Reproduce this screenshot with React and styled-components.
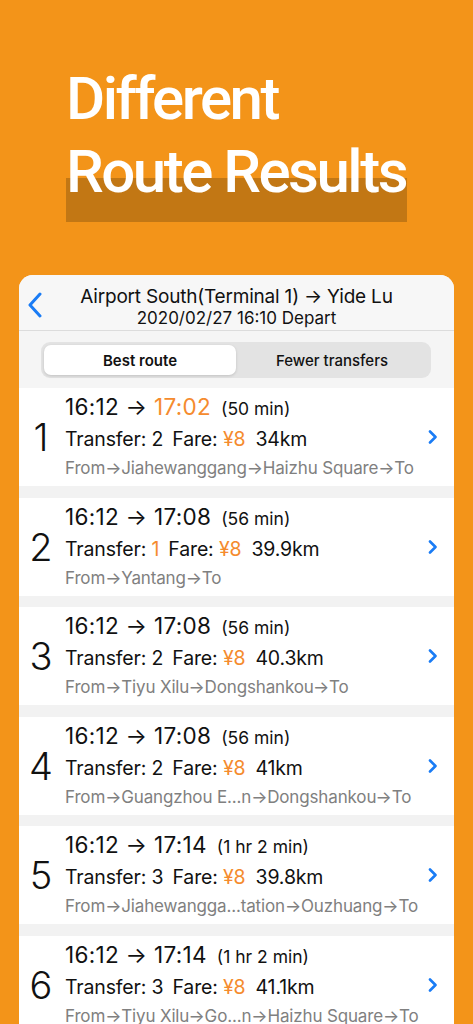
import React from "react";
import styled, { createGlobalStyle } from "styled-components";

const Global = createGlobalStyle`
  html, body { margin: 0; padding: 0; }
  body {
    background: #F39419;
    font-family: Inter, "Noto Sans", "Liberation Sans", sans-serif;
    overflow: hidden;
  }
`;

const Page = styled.div`
  width: 473px;
  height: 1024px;
  overflow: hidden;
  background: #F39419;
  display: flex;
  flex-direction: column;
  & > * { flex-shrink: 0; }
`;

const Hero = styled.div`
  position: relative;
  margin: 62px 0 0 66px;
  width: max-content;
`;

const HeroLine = styled.div`
  position: relative;
  z-index: 1;
  font-family: Roboto, "DejaVu Sans", sans-serif;
  font-weight: 500;
  font-size: 60px;
  line-height: 73px;
  letter-spacing: -2.5px;
  color: #ffffff;
  white-space: nowrap;
`;

const HeroBar = styled.div`
  position: absolute;
  left: 0;
  top: 116px;
  width: 341px;
  height: 44px;
  background: #C27714;
  z-index: 0;
`;

const Card = styled.div`
  margin: 67px 19px 0 19px;
  background: #F2F2F2;
  border-radius: 14px 14px 0 0;
  overflow: hidden;
  display: flex;
  flex-direction: column;
  & > * { flex-shrink: 0; }
`;

const Header = styled.div`
  height: 55px;
  background: #F7F7F7;
  border-bottom: 1px solid #DCDCDC;
  display: grid;
  grid-template-columns: 40px 1fr 40px;
  align-items: center;
`;

const Back = styled.div`
  display: flex;
  align-items: center;
  padding-left: 8px;
  padding-top: 4px;
`;

const HeaderText = styled.div`
  align-self: start;
  display: flex;
  flex-direction: column;
  align-items: center;
  padding-top: 10px;
`;

const HeaderTitle = styled.div`
  font-size: 19px;
  line-height: 23px;
  color: #111;
  white-space: nowrap;
  letter-spacing: -0.2px;
`;

const HeaderSub = styled.div`
  font-size: 17px;
  line-height: 20px;
  color: #111;
  white-space: nowrap;
`;

const SegmentArea = styled.div`
  background: #F5F5F5;
  padding: 11px 23px 10px 22px;
`;

const Segmented = styled.div`
  height: 36px;
  background: #E3E3E3;
  border-radius: 9px;
  padding: 3px;
  box-sizing: border-box;
  display: grid;
  grid-template-columns: 1fr 1fr;
`;

const Segment = styled.div`
  display: flex;
  align-items: center;
  justify-content: center;
  border-radius: 7px;
  font-size: 15px;
  font-weight: ${(p) => (p.$active ? 600 : 500)};
  color: #111;
  background: ${(p) => (p.$active ? "#ffffff" : "transparent")};
  box-shadow: ${(p) => (p.$active ? "0 1px 3px rgba(0,0,0,0.15)" : "none")};
`;

const List = styled.div`
  display: flex;
  flex-direction: column;
  gap: 11.5px;
`;

const Row = styled.div`
  height: 98px;
  box-sizing: border-box;
  background: #ffffff;
  display: grid;
  grid-template-columns: 46px 1fr 26px;
  align-items: center;
`;

const Num = styled.div`
  text-align: center;
  padding-right: 2px;
  font-size: 38px;
  font-weight: 300;
  color: #111;
  line-height: 1;
`;

const Info = styled.div`
  display: flex;
  flex-direction: column;
  min-width: 0;
`;

const Line1 = styled.div`
  font-size: 22.5px;
  line-height: 30px;
  color: #111;
  white-space: nowrap;
  letter-spacing: 0.3px;
`;

const Dur = styled.span`
  font-size: 17.5px;
  letter-spacing: 0;
  margin-left: 10px;
`;

const Line2 = styled.div`
  font-size: 19.5px;
  line-height: 30px;
  color: #111;
  white-space: nowrap;
  letter-spacing: -0.15px;
`;

const Line3 = styled.div`
  font-size: 17px;
  line-height: 28px;
  color: #808080;
  white-space: nowrap;
  overflow: hidden;
  letter-spacing: -0.15px;
`;

const Orange = styled.span`
  color: #F58B2E;
`;

const Gap = styled.span`
  margin-left: ${(p) => p.$w}px;
`;

const Chevron = styled.div`
  display: flex;
  align-items: center;
`;

const routes = [
  { arr: "17:02", arrOrange: true, dur: "(50 min)", tr: "2", trOrange: false, km: "34km", path: "From→Jiahewanggang→Haizhu Square→To" },
  { arr: "17:08", dur: "(56 min)", tr: "1", trOrange: true, km: "39.9km", path: "From→Yantang→To" },
  { arr: "17:08", dur: "(56 min)", tr: "2", km: "40.3km", path: "From→Tiyu Xilu→Dongshankou→To" },
  { arr: "17:08", dur: "(56 min)", tr: "2", km: "41km", path: "From→Guangzhou E...n→Dongshankou→To" },
  { arr: "17:14", dur: "(1 hr 2 min)", tr: "3", km: "39.8km", path: "From→Jiahewangga...tation→Ouzhuang→To" },
  { arr: "17:14", dur: "(1 hr 2 min)", tr: "3", km: "41.1km", path: "From→Tiyu Xilu→Go...n→Haizhu Square→To" },
];

const BackIcon = () => (
  <svg width="16" height="26" viewBox="0 0 16 26">
    <path d="M13 2 L3 13 L13 24" fill="none" stroke="#1A7CF5" strokeWidth="3" strokeLinecap="round" strokeLinejoin="round" />
  </svg>
);

const ChevronIcon = () => (
  <svg width="10" height="14" viewBox="0 0 10 14">
    <path d="M2 1.5 L7.5 7 L2 12.5" fill="none" stroke="#1A7CF5" strokeWidth="2.6" strokeLinecap="round" strokeLinejoin="round" />
  </svg>
);

export default function App() {
  return (
    <Page>
      <Global />
      <Hero>
        <HeroBar />
        <HeroLine>Different</HeroLine>
        <HeroLine>Route Results</HeroLine>
      </Hero>
      <Card>
        <Header>
          <Back>
            <BackIcon />
          </Back>
          <HeaderText>
            <HeaderTitle>Airport South(Terminal 1) → Yide Lu</HeaderTitle>
            <HeaderSub>2020/02/27 16:10 Depart</HeaderSub>
          </HeaderText>
          <div />
        </Header>
        <SegmentArea>
          <Segmented>
            <Segment $active>Best route</Segment>
            <Segment>Fewer transfers</Segment>
          </Segmented>
        </SegmentArea>
        <List>
          {routes.map((r, i) => (
            <Row key={i}>
              <Num>{i + 1}</Num>
              <Info>
                <Line1>
                  16:12 → {r.arrOrange ? <Orange>{r.arr}</Orange> : r.arr}
                  <Dur>{r.dur}</Dur>
                </Line1>
                <Line2>
                  Transfer: {r.trOrange ? <Orange>{r.tr}</Orange> : r.tr}
                  <Gap $w={9}>Fare: </Gap>
                  <Orange>¥8</Orange>
                  <Gap $w={10}>{r.km}</Gap>
                </Line2>
                <Line3>{r.path}</Line3>
              </Info>
              <Chevron>
                <ChevronIcon />
              </Chevron>
            </Row>
          ))}
        </List>
      </Card>
    </Page>
  );
}
